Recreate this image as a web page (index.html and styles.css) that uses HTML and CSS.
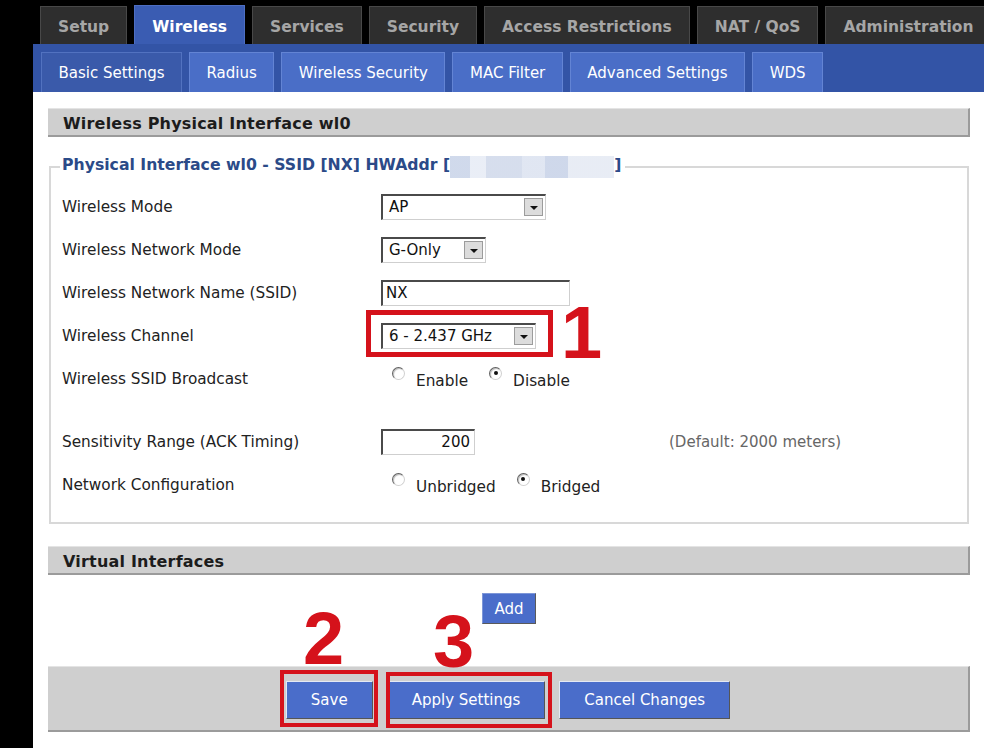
FILE: index.html
```html
<!DOCTYPE html>
<html lang="en">
<head>
<meta charset="utf-8">
<title>Wireless - Basic Settings</title>
<link rel="stylesheet" href="styles.css">
</head>
<body>
<div class="page">
  <nav class="tabs">
    <div class="tab">Setup</div>
    <div class="tab active">Wireless</div>
    <div class="tab">Services</div>
    <div class="tab">Security</div>
    <div class="tab">Access Restrictions</div>
    <div class="tab">NAT / QoS</div>
    <div class="tab">Administration</div>
  </nav>
  <main class="main">
    <nav class="subtabs">
      <div class="subtab active">Basic Settings</div>
      <div class="subtab">Radius</div>
      <div class="subtab">Wireless Security</div>
      <div class="subtab">MAC Filter</div>
      <div class="subtab">Advanced Settings</div>
      <div class="subtab">WDS</div>
    </nav>
    <div class="content">
      <h2 class="section-head">Wireless Physical Interface wl0</h2>
      <fieldset class="iface">
        <legend>Physical Interface wl0 - SSID [NX] HWAddr [<span class="blur"></span>]</legend>
        <div class="row">
          <span class="label">Wireless Mode</span>
          <div class="select sel-mode"><span class="val">AP</span><span class="arrow"></span></div>
        </div>
        <div class="row">
          <span class="label">Wireless Network Mode</span>
          <div class="select sel-net"><span class="val">G-Only</span><span class="arrow"></span></div>
        </div>
        <div class="row">
          <span class="label">Wireless Network Name (SSID)</span>
          <div class="textbox ssid">NX</div>
        </div>
        <div class="row">
          <span class="label">Wireless Channel</span>
          <div class="select sel-chan"><span class="val">6 - 2.437 GHz</span><span class="arrow"></span></div>
        </div>
        <div class="row">
          <span class="label">Wireless SSID Broadcast</span>
          <div class="radios">
            <span class="opt"><span class="radio"></span>Enable</span>
            <span class="opt"><span class="radio on"></span>Disable</span>
          </div>
        </div>
        <div class="spacer"></div>
        <div class="row">
          <span class="label">Sensitivity Range (ACK Timing)</span>
          <div class="inline">
            <div class="textbox ack">200</div>
            <span class="hint">(Default: 2000 meters)</span>
          </div>
        </div>
        <div class="row">
          <span class="label">Network Configuration</span>
          <div class="radios">
            <span class="opt"><span class="radio"></span>Unbridged</span>
            <span class="opt"><span class="radio on"></span>Bridged</span>
          </div>
        </div>
      </fieldset>
      <h2 class="section-head second">Virtual Interfaces</h2>
      <div class="add-row"><button class="btn add">Add</button></div>
      <div class="button-bar">
        <button class="btn">Save</button>
        <button class="btn">Apply Settings</button>
        <button class="btn">Cancel Changes</button>
      </div>
    </div>
  </main>
</div>
<div class="mark box-chan"></div>
<div class="mark box-save"></div>
<div class="mark box-apply"></div>
<div class="num num1">1</div>
<div class="num num2">2</div>
<div class="num num3">3</div>
</body>
</html>
```

FILE: styles.css
```css
body {
  margin: 0;
  background: #000;
  font-family: "DejaVu Sans", Verdana, sans-serif;
}

.page {
  width: 984px;
  height: 748px;
  overflow: hidden;
}

/* top tabs */
.tabs {
  display: flex;
  align-items: flex-end;
  gap: 7px;
  height: 44px;
  padding-left: 40px;
  box-sizing: border-box;
}

.tab {
  flex-shrink: 0;
  height: 38px;
  box-sizing: border-box;
  padding: 3px 17px 0;
  display: flex;
  align-items: center;
  background: #2e2e2e;
  border: 1px solid #484848;
  border-bottom: none;
  color: #a6a6a6;
  font-size: 15.5px;
  font-weight: bold;
  white-space: nowrap;
}

.tab.active {
  height: 39px;
  background: #3a5cb2;
  border-color: #4d6ec2;
  color: #fff;
}

/* main area */
.main {
  margin-left: 33px;
  background: #fff;
  height: 704px;
}

.subtabs {
  display: flex;
  align-items: flex-end;
  gap: 7px;
  height: 48px;
  padding-left: 8px;
  box-sizing: border-box;
  background: #3354a6;
}

.subtab {
  height: 40px;
  box-sizing: border-box;
  padding: 0 16.5px;
  display: flex;
  align-items: center;
  background: #4a6ec7;
  border: 1px solid #6384d4;
  border-bottom: none;
  color: #fff;
  font-size: 15px;
  white-space: nowrap;
}

.subtab.active {
  background: #3a5aaa;
  border-color: #5272c0;
}

.content {
  padding: 16px 14px 0 15px;
}

.section-head {
  margin: 0;
  height: 29px;
  box-sizing: border-box;
  padding-left: 15px;
  background: #cfcfcf;
  border-top: 1px solid #e4e4e4;
  border-right: 2px solid #9b9b9b;
  border-bottom: 2px solid #9b9b9b;
  color: #1c1c1c;
  font-size: 16px;
  font-weight: bold;
  line-height: 30px;
  letter-spacing: 0.2px;
}

.section-head.second {
  margin-top: 22px;
}

/* fieldset */
.iface {
  margin: 18px 1px 0 1px;
  padding: 7px 0 16px 11px;
  border: 2px solid #d8d8d8;
  min-width: 0;
}

.iface legend {
  margin-left: -2px;
  padding: 0 4px 0 2px;
  color: #2b4a88;
  font-size: 15.7px;
  font-weight: bold;
  line-height: 20px;
  white-space: nowrap;
}

.blur {
  display: inline-block;
  width: 164px;
  height: 22px;
  vertical-align: top;
  margin-top: 1px;
  background:
    linear-gradient(90deg, #c8d3e8 0 12%, #e6ebf5 12% 22%, #cfd8ea 22% 44%, #dbe2f0 44% 58%, #c6d1e7 58% 72%, #e4e9f3 72% 100%);
  opacity: 0.85;
}

.row {
  display: grid;
  grid-template-columns: 319px auto;
  align-items: center;
  height: 43px;
}

.label {
  color: #222;
  font-size: 15.3px;
}

.spacer {
  height: 20px;
}

/* controls */
.select,
.textbox {
  box-sizing: border-box;
  height: 26px;
  display: flex;
  align-items: center;
  background: #fff;
  border-style: solid;
  border-width: 2px 1px 1px 2px;
  border-color: #4a4a4a #cfcfcf #cfcfcf #4a4a4a;
  color: #111;
  font-size: 15px;
}

.select {
  padding-left: 6px;
}

.sel-mode { width: 165px; }
.sel-net { width: 105px; }
.sel-chan { width: 155px; }

.arrow {
  margin-left: auto;
  margin-right: 2px;
  width: 19px;
  height: 18px;
  box-sizing: border-box;
  background: #dcdcdc;
  border: 1px solid #9c9c9c;
  display: flex;
  align-items: center;
  justify-content: center;
}

.arrow::after {
  content: "";
  border-left: 4px solid transparent;
  border-right: 4px solid transparent;
  border-top: 4px solid #111;
  margin-top: 1px;
}

.textbox {
  padding: 0 3px;
}

.ssid { width: 189px; }

.ack {
  width: 94px;
  justify-content: flex-end;
  padding-right: 4px;
}

.inline {
  display: flex;
  align-items: center;
}

.hint {
  margin-left: 194px;
  color: #666;
  font-size: 15px;
}

.radios {
  display: flex;
  padding-left: 11px;
  gap: 21px;
}

.opt {
  display: flex;
  align-items: flex-start;
  color: #222;
  font-size: 15.3px;
  padding-top: 4px;
}

.radio {
  position: relative;
  width: 13px;
  height: 13px;
  box-sizing: border-box;
  margin: -5px 11px 0 0;
  border-radius: 50%;
  border: 1px solid;
  border-color: #606060 #d0d0d0 #d0d0d0 #606060;
  background: #fff;
  box-shadow: inset 1px 1px 1px #bbb;
}

.radio.on::after {
  content: "";
  position: absolute;
  left: 3.5px;
  top: 3.5px;
  width: 4px;
  height: 4px;
  border-radius: 50%;
  background: #111;
}

/* buttons */
.btn {
  box-sizing: border-box;
  height: 38px;
  padding: 0 24px;
  background: #4a6dca;
  border: 1px solid;
  border-color: #e4e9f4 #555 #555 #e4e9f4;
  color: #fff;
  font-family: "DejaVu Sans", Verdana, sans-serif;
  font-size: 15px;
}

.add-row {
  display: flex;
  justify-content: center;
  margin-top: 18px;
}

.btn.add {
  height: 31px;
  padding: 0 11px;
  border-color: #7d96d8 #5a5a5a #5a5a5a #7d96d8;
}

.button-bar {
  margin-top: 42px;
  height: 66px;
  box-sizing: border-box;
  padding-top: 14px;
  display: flex;
  justify-content: center;
  align-items: flex-start;
  gap: 14px;
  background: #cfcfcf;
  border-top: 1px solid #e4e4e4;
  border-right: 2px solid #9b9b9b;
  border-bottom: 2px solid #9b9b9b;
}

/* red annotations */
.mark {
  position: absolute;
  box-sizing: border-box;
  border: 5px solid #d5121b;
}

.box-chan { left: 366px; top: 310px; width: 187px; height: 47px; }
.box-save { left: 280px; top: 670px; width: 98px; height: 57px; border-width: 4px; }
.box-apply { left: 386px; top: 672px; width: 166px; height: 56px; border-width: 4px; }

.num {
  position: absolute;
  color: #d5121b;
  font-family: "Liberation Sans", Arial, sans-serif;
  font-weight: bold;
  font-size: 74px;
  line-height: 1;
}

.num1 { left: 561px; top: 296px; }
.num2 { left: 303px; top: 602px; }
.num3 { left: 433px; top: 605px; }
```
